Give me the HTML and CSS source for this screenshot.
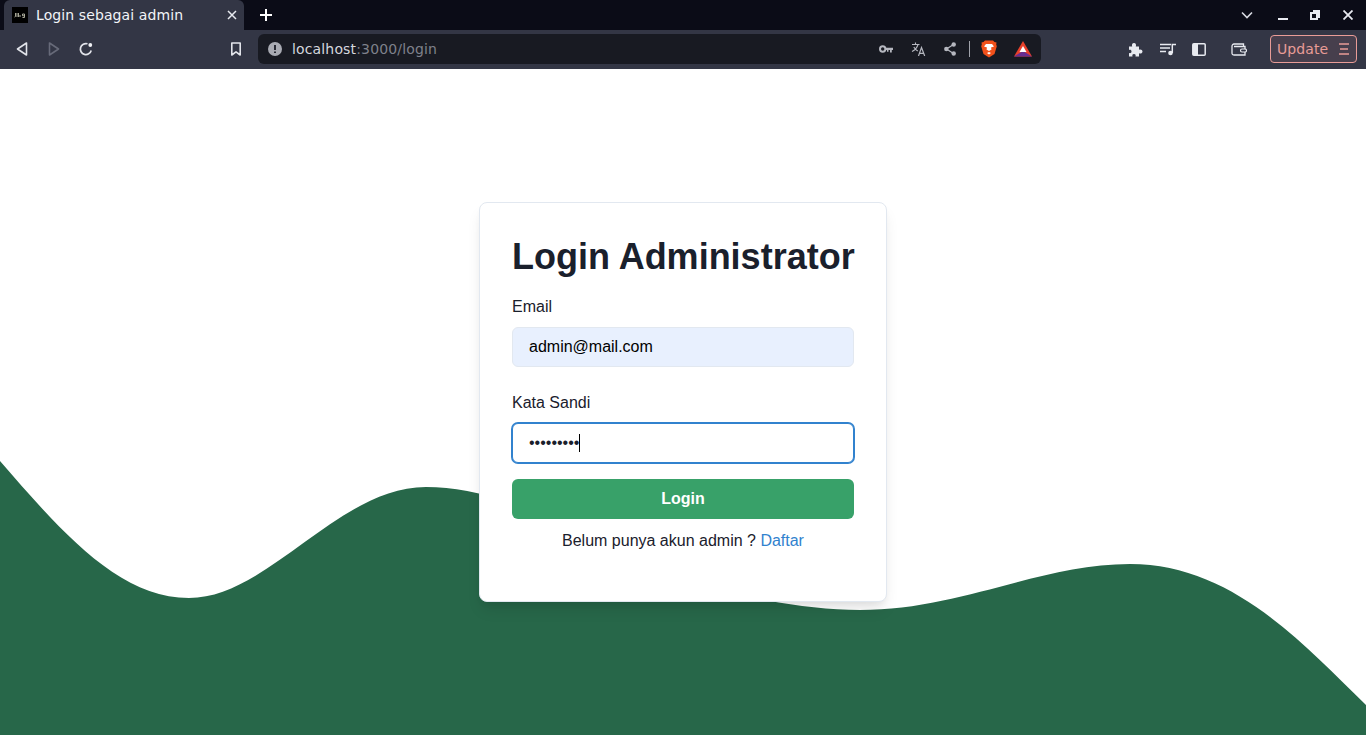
FILE: index.html
```html
<!DOCTYPE html>
<html lang="id">
<head>
<meta charset="utf-8">
<title>Login sebagai admin</title>
<link rel="stylesheet" href="styles.css">
</head>
<body>
<header class="browser">
  <div class="tabbar">
    <div class="tab">
      <svg class="favicon" width="16" height="16" viewBox="0 0 16 16"><rect width="16" height="16" fill="#000"/><path d="M3.500 6v3.500l-1 .5M5 6v4M6.500 6v4M8 8v2M10.500 7h2v3.500h-2M10.500 7v1.800h2" stroke="#b9b9a8" stroke-width=".9" fill="none"/></svg>
      <span class="tab-title">Login sebagai admin</span>
      <svg class="tab-close" width="10" height="10" viewBox="0 0 10 10"><path d="M1 1l8 8M9 1l-8 8" stroke="#e8eaf0" stroke-width="1.500"/></svg>
    </div>
    <svg class="new-tab" width="14" height="14" viewBox="0 0 14 14"><path d="M7 1v12M1 7h12" stroke="#fff" stroke-width="2"/></svg>
    <div class="window-controls">
      <svg class="tab-menu" width="12" height="8" viewBox="0 0 12 8"><path d="M1 1.500l5 5 5-5" stroke="#d8dae2" stroke-width="1.600" fill="none"/></svg>
      <svg class="win-min" width="10" height="10" viewBox="0 0 10 10"><path d="M0 9h10" stroke="#e8eaf0" stroke-width="2"/></svg>
      <svg class="win-max" width="10" height="10" viewBox="0 0 10 10"><path d="M3 1h6v6H7M1 3h6v6H1z" stroke="#e8eaf0" stroke-width="2" fill="none"/></svg>
      <svg class="win-close" width="10" height="10" viewBox="0 0 10 10"><path d="M.5.500l9 9M9.500.500l-9 9" stroke="#e8eaf0" stroke-width="1.800"/></svg>
    </div>
  </div>
  <div class="toolbar">
    <svg class="nav-icon" width="12" height="14" viewBox="0 0 12 14"><path d="M10.500 1v12L1.500 7z" stroke="#e2e4ea" stroke-width="1.600" fill="none" stroke-linejoin="round"/></svg>
    <svg class="nav-icon nav-forward" width="12" height="14" viewBox="0 0 12 14"><path d="M1.500 1v12l9-6z" stroke="#676a79" stroke-width="1.600" fill="none" stroke-linejoin="round"/></svg>
    <svg class="nav-icon" width="14" height="14" viewBox="0 0 14 14"><path d="M12.200 8.500A5.500 5.500 0 1 1 8.500 1.800" stroke="#e2e4ea" stroke-width="1.700" fill="none"/><circle cx="11.300" cy="3" r="1.900" fill="#f0f1f5"/></svg>
    <svg class="bookmark" width="12" height="14" viewBox="0 0 12 14"><path d="M1.800 1h8.400v12L6 9.800 1.800 13z" stroke="#e2e4ea" stroke-width="1.600" fill="none" stroke-linejoin="round"/></svg>
    <div class="omnibox">
      <svg class="info" width="14" height="14" viewBox="0 0 14 14"><circle cx="7" cy="7" r="7" fill="#a9abb3"/><path d="M7 3v5M7 9.500v1.600" stroke="#1a1c26" stroke-width="1.800"/></svg>
      <span class="url">localhost<span class="url-dim">:3000/login</span></span>
      <div class="omni-icons">
        <svg class="omni-key" width="14" height="8" viewBox="0 0 14 8"><circle cx="3.700" cy="4" r="2.700" stroke="#b5b7bf" stroke-width="2" fill="none"/><path d="M6 2.800h8v2.200h-1.200V7.500h-1.800V5H9.500V6.800H8V5H6z" fill="#b5b7bf"/></svg>
        <svg class="omni-translate" width="15" height="14" viewBox="0 0 15 14"><path d="M1 2.500h7.500M4.500 .5v2M7 2.500C6 6 4 8 1 9.500M2.800 5c1 2 2.500 3.200 4 4" stroke="#b5b7bf" stroke-width="1.100" fill="none"/><path d="M7.500 14l3-8.500 3.200 8.500M8.700 11.300h3.800" stroke="#b5b7bf" stroke-width="1.200" fill="none"/></svg>
        <svg class="omni-share" width="12" height="14" viewBox="0 0 12 14"><path d="M9.500 2.500L2.500 7l7 4.500" stroke="#b5b7bf" stroke-width="1.300" fill="none"/><circle cx="9.700" cy="2.500" r="2.200" fill="#b5b7bf"/><circle cx="2.300" cy="7" r="2.200" fill="#b5b7bf"/><circle cx="9.700" cy="11.500" r="2.200" fill="#b5b7bf"/></svg>
        <span class="omni-sep"></span>
        <svg class="omni-brave" width="16" height="18" viewBox="0 0 16 18"><path d="M4 .5h8l1.500 1.500 2 .5-.3 2 .6 1.800-2.300 7.700L8 17.500 2.500 14 .2 6.300.8 4.500.5 2.500l2-.5z" fill="#f1511b"/><path d="M3 6.500l3 1-.5 2 2.500 1.500 2.500-1.500-.5-2 3-1-2-2.500H5z" fill="#fff"/><path d="M6 13l2 1.500L10 13l-2-1z" fill="#fff"/></svg>
        <svg width="18" height="16" viewBox="0 0 18 16"><path d="M9 0L0 15.500h18z" fill="#e8402a"/><path d="M0 15.500L9 10l9 5.500z" fill="#662d91"/><path d="M9 5L5.500 11h7z" fill="#fff"/></svg>
      </div>
    </div>
    <div class="tools">
      <svg class="tool-puzzle" width="15" height="15" viewBox="0 0 15 15"><path d="M1 4.500h3.200C3.500 2.800 4.300 1 6 1s2.500 1.800 1.800 3.500H11v3.200c1.700-.7 3.500.1 3.500 1.800S12.700 12 11 11.300V14.500H7.500c.5-1.700-.2-2.500-1.500-2.500s-2 .8-1.500 2.500H1v-3.500c1.500.5 2.500-.3 2.500-1.500S2.500 7.500 1 8z" fill="#e8eaf0"/></svg>
      <svg class="tool-media" width="16" height="13" viewBox="0 0 16 13"><path d="M0 1.500h11M0 5h10M0 8.500h6" stroke="#e8eaf0" stroke-width="1.400"/><circle cx="10.500" cy="10" r="2.300" fill="#e8eaf0"/><path d="M12.300 10V1.500H16" stroke="#e8eaf0" stroke-width="1.500" fill="none"/></svg>
      <svg class="tool-side" width="14" height="13" viewBox="0 0 14 13"><rect x=".8" y=".8" width="12.400" height="11.400" rx="1" stroke="#e8eaf0" stroke-width="1.500" fill="none"/><rect x="1" y="1" width="5" height="11" fill="#e8eaf0"/></svg>
      <svg class="tool-wallet" width="16" height="13" viewBox="0 0 16 13"><path d="M1 3.500C1 2 2 1 3 1h9.500v2M1 3.500V10.500C1 11.500 2 12 3 12h11V3.500H3" stroke="#e8eaf0" stroke-width="1.300" fill="none"/><rect x="9.500" y="6" width="6" height="3" rx="1.500" fill="#333645" stroke="#e8eaf0" stroke-width="1.200"/></svg>
      <div class="update">
        <span>Update</span>
        <svg width="10" height="12" viewBox="0 0 10 12"><path d="M0 1h10M1 6h8M0 11h10" stroke="#e99c97" stroke-width="1.500"/></svg>
      </div>
    </div>
  </div>
</header>
<main class="page">
  <svg class="wave" viewBox="0 69 1366 666" preserveAspectRatio="none" aria-hidden="true"><path d="M0 461C60 530 118 598 189 598C268 598 338 487 426 487C480 487 540 510 600 540C660 570 715 590 767 600.500C798 606 830 610 860 610C960 610 1040 564 1130 564C1230 564 1300 640 1366 705V735H0Z" fill="#276749"/></svg>
  <form class="card">
    <h1 class="card-title">Login Administrator</h1>
    <label class="field-label" for="email">Email</label>
    <input class="field field-filled" id="email" type="text" value="admin@mail.com">
    <label class="field-label field-label-gap" for="pass">Kata Sandi</label>
    <div class="field-wrap">
      <input class="field field-focus" id="pass" type="password" value="admin1234">
      <span class="caret"></span>
    </div>
    <button class="submit" type="button">Login</button>
    <p class="hint">Belum punya akun admin ? <a class="hint-link" href="#">Daftar</a></p>
  </form>
</main>
</body>
</html>
```

FILE: styles.css
```css
* { box-sizing: border-box; }
html, body { margin: 0; height: 100%; }
body {
  display: flex;
  flex-direction: column;
  height: 735px;
  overflow: hidden;
  background: #fff;
  font-family: "Liberation Sans", Arial, sans-serif;
  color: #1a202c;
}

.browser { font-family: "DejaVu Sans", sans-serif; flex: none; }
.tabbar {
  display: flex;
  align-items: center;
  height: 30px;
  background: #0b0c17;
  padding-left: 4px;
}
.tab {
  display: flex;
  align-items: center;
  width: 240px;
  height: 30px;
  padding: 0 6px 0 8px;
  background: #333645;
  border-radius: 6px 6px 0 0;
  color: #f2f4f8;
}
.favicon { flex: none; }
.tab-title { margin-left: 8px; font-size: 14px; letter-spacing: .1px; flex: 1; white-space: nowrap; }
.tab-close { flex: none; margin-right: 1px; }
.new-tab { margin-left: 15px; }
.window-controls { display: flex; align-items: center; margin-left: auto; }
.tab-menu { margin-right: 25px; }
.win-min { margin-right: 22px; }
.win-max { margin-right: 23px; }
.win-close { margin-right: 13px; }

.toolbar {
  display: flex;
  align-items: center;
  height: 39px;
  padding: 0 0 1px 16px;
  background: #333645;
}
.nav-icon { flex: none; margin-right: 20px; }
.nav-forward { margin-right: 19px; }
.bookmark { flex: none; margin-left: 117px; }
.omnibox {
  display: flex;
  align-items: center;
  width: 783px;
  height: 30px;
  margin-left: 16px;
  padding: 0 9px 0 10px;
  background: #181a22;
  border-radius: 6px;
}
.info { flex: none; }
.url { margin-left: 10px; font-size: 14px; letter-spacing: .15px; color: #d5d7de; }
.url-dim { color: #7f818b; }
.omni-icons { display: flex; align-items: center; margin-left: auto; }
.omni-key { margin-right: 18px; }
.omni-translate { margin-right: 18px; }
.omni-share { margin-right: 13px; }
.omni-sep { width: 1px; height: 16px; background: #a0a2aa; margin-right: 11px; }
.omni-brave { margin-right: 17px; }
.tools { display: flex; align-items: center; margin-left: 87px; }
.tool-puzzle { margin-right: 17px; }
.tool-media { margin-right: 16px; }
.tool-side { margin-right: 25px; }
.tool-wallet { margin-right: 23px; }
.update {
  display: flex;
  align-items: center;
  gap: 11px;
  width: 87px;
  height: 28px;
  padding-left: 6px;
  background: #473f4d;
  border: 1px solid #e99c97;
  border-radius: 4px;
  color: #e99c97;
  font-size: 14px;
  letter-spacing: .1px;
}

.page {
  position: relative;
  flex: 1;
  display: flex;
  align-items: center;
  justify-content: center;
}
.wave { position: absolute; inset: 0; width: 100%; height: 100%; }
.card {
  position: relative;
  display: flex;
  flex-direction: column;
  width: 408px;
  height: 400px;
  padding: 32px;
  background: #fff;
  border: 1px solid #e2e8f0;
  border-radius: 8px;
  box-shadow: 0 10px 15px -3px rgba(0,0,0,.1), 0 4px 6px -2px rgba(0,0,0,.05);
}
.card-title {
  margin: 0 0 17px;
  font-size: 36px;
  line-height: 1.2;
  font-weight: 700;
  white-space: nowrap;
}
.field-label { display: block; margin-bottom: 8px; font-size: 16px; line-height: 24px; }
.field-label-gap { margin-top: 24px; }
.field-wrap { position: relative; }
.field {
  display: block;
  width: 100%;
  height: 40px;
  padding: 0 16px;
  border: 1px solid #e2e8f0;
  border-radius: 6px;
  font: 16px "Liberation Sans", Arial, sans-serif;
  color: #1a202c;
  background: #fff;
  outline: none;
}
.field-filled { background: #e8f0fe; color: #000; }
.field-focus { border-color: #3182ce; box-shadow: 0 0 0 1px #3182ce; }
.caret {
  position: absolute;
  left: 67px;
  top: 11px;
  width: 1px;
  height: 18px;
  background: #000;
}
.submit {
  margin-top: 16px;
  height: 40px;
  border: 0;
  border-radius: 6px;
  background: #38a169;
  color: #fff;
  font: 700 16px "Liberation Sans", Arial, sans-serif;
}
.hint { margin: 10px 0 0; text-align: center; font-size: 16px; line-height: 24px; }
.hint-link { color: #3182ce; text-decoration: none; }
```
